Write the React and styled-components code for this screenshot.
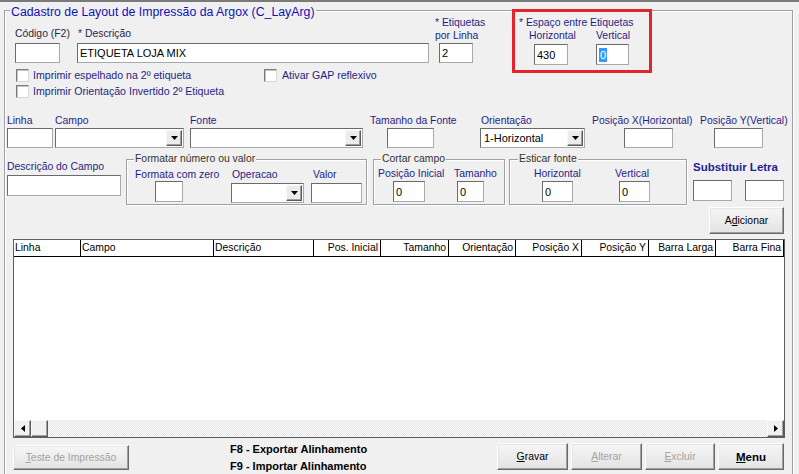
import React from "react";
import styled, { createGlobalStyle } from "styled-components";

const GlobalStyle = createGlobalStyle`
  html, body {
    margin: 0;
    padding: 0;
    background: #f0f0f0;
  }
  body {
    font-family: "Liberation Sans", Arial, sans-serif;
    font-size: 10.4px;
    color: #000;
  }
`;

const Page = styled.div`
  width: 799px;
  height: 474px;
  overflow: hidden;
  box-sizing: border-box;
  border-top: 2px solid #7a7a7a;
  background: #f0f0f0;
`;

const Group = styled.div`
  position: relative;
  box-sizing: border-box;
  flex: none;
  width: ${(p) => p.$w}px;
  height: ${(p) => p.$h}px;
  margin: ${(p) => p.$mt || 0}px 0 0 ${(p) => p.$ml || 0}px;
  border: 1px solid #a0a0a0;
  box-shadow: inset 1px 1px #fff, 1px 1px #fff;
`;

const Legend = styled.span`
  position: absolute;
  left: ${(p) => p.$x}px;
  top: ${(p) => p.$y}px;
  padding: 0 1px;
  background: #f0f0f0;
  white-space: nowrap;
  line-height: ${(p) => (p.$title ? 14 : 13)}px;
  font-size: ${(p) => (p.$title ? 12.3 : 10.4)}px;
  color: ${(p) => (p.$title ? "#1010b8" : "#333")};
`;

const Section = styled.div`
  display: flex;
  align-items: flex-start;
  box-sizing: border-box;
  height: ${(p) => p.$h}px;
  padding: ${(p) => p.$pt || 0}px ${(p) => p.$pr || 0}px 0 ${(p) => p.$pl || 0}px;
  justify-content: ${(p) => (p.$end ? "flex-end" : "flex-start")};
`;

const Column = styled.div`
  display: flex;
  flex-direction: column;
  flex: none;
  width: ${(p) => (p.$w ? `${p.$w}px` : "auto")};
  padding-top: ${(p) => p.$pt || 0}px;
  margin-left: ${(p) => p.$ml || 0}px;
`;

const Row = styled.div`
  display: flex;
  align-items: flex-start;
  gap: ${(p) => p.$gap || 0}px;
  padding: ${(p) => p.$pt || 0}px 0 0 ${(p) => p.$pl || 0}px;
`;

const Field = styled.div`
  display: flex;
  flex-direction: column;
  align-items: flex-start;
  flex: none;
  width: ${(p) => (p.$w ? `${p.$w}px` : "auto")};
  margin-top: ${(p) => p.$mt || 0}px;
  margin-left: ${(p) => p.$ml || 0}px;
`;

const Label = styled.span`
  display: block;
  line-height: 13px;
  white-space: nowrap;
  color: ${(p) => (p.$dark ? "#26264e" : "#1f1f86")};
  padding-left: ${(p) => p.$indent || 0}px;
  margin-bottom: ${(p) => p.$gap ?? 2}px;
`;

const BoldLabel = styled(Label)`
  font-size: 11.5px;
  font-weight: bold;
  color: #1f1f96;
`;

const TextBox = styled.div`
  box-sizing: border-box;
  flex: none;
  width: ${(p) => p.$w}px;
  height: ${(p) => p.$h || 20}px;
  margin-left: ${(p) => p.$ml || 0}px;
  padding: 0 2px;
  display: flex;
  align-items: center;
  background: #fff;
  border: 1px solid;
  border-color: #6b6b6b #a9a9a9 #a9a9a9 #6b6b6b;
  font-family: ${(p) =>
    p.$narrow
      ? `"Liberation Sans Narrow", "Liberation Sans", sans-serif`
      : `"Liberation Sans", Arial, sans-serif`};
  font-size: 11px;
  white-space: nowrap;
  overflow: hidden;
`;

const Selected = styled.span`
  background: #3399ff;
  color: #fff;
  padding: 0 1px;
  line-height: 14px;
`;

const Select = styled(TextBox)`
  padding: 1px;
`;

const SelectText = styled.span`
  flex: 1;
  padding-left: 2px;
`;

const DropButton = styled.span`
  flex: none;
  width: 16px;
  height: 100%;
  box-sizing: border-box;
  background: #ececec;
  border: 1px solid;
  border-color: #f8f8f8 #5a5a5a #5a5a5a #f8f8f8;
  box-shadow: inset -1px -1px #a0a0a0;
  display: flex;
  align-items: center;
  justify-content: center;
`;

const CheckRow = styled.div`
  display: flex;
  align-items: center;
  height: 16px;
  margin-top: ${(p) => p.$mt || 0}px;
`;

const CheckItem = styled.div`
  display: flex;
  align-items: center;
  flex: none;
  width: ${(p) => (p.$w ? `${p.$w}px` : "auto")};
  padding-left: 1px;
`;

const CheckBox = styled.span`
  width: 13px;
  height: 13px;
  box-sizing: border-box;
  flex: none;
  background: #fff;
  border: 1px solid;
  border-color: #7b7b7b #d6d6d6 #d6d6d6 #7b7b7b;
  box-shadow: inset 1px 1px #c4c4c4;
`;

const CheckText = styled.span`
  margin-left: ${(p) => p.$gap || 4}px;
  color: #1f1f86;
  font-size: 10.6px;
  white-space: nowrap;
`;

const SpacingGroup = styled.div`
  position: relative;
  flex: none;
  width: 125px;
  margin-top: 5px;

  &::after {
    content: "";
    position: absolute;
    left: -7px;
    top: -7px;
    width: 140px;
    height: 64px;
    box-sizing: border-box;
    border: 3px solid #e2242d;
    pointer-events: none;
  }
`;

const Button = styled.button`
  box-sizing: border-box;
  flex: none;
  width: ${(p) => p.$w}px;
  height: ${(p) => p.$h || 27}px;
  margin-top: ${(p) => p.$mt || 0}px;
  padding: 0;
  font-family: "Liberation Sans", Arial, sans-serif;
  font-size: ${(p) => (p.$bold ? 11.5 : 10.4)}px;
  font-weight: ${(p) => (p.$bold ? "bold" : "normal")};
  color: ${(p) => (p.disabled ? "#a3a3a3" : "#000")};
  background: linear-gradient(#f6f6f6, #e3e3e3);
  border: 1px solid;
  border-color: #fff #696969 #696969 #fff;
  box-shadow: inset -1px -1px #a0a0a0, inset 1px 1px #e6e6e6;
`;

const Grid = styled.div`
  box-sizing: border-box;
  width: 772px;
  height: 199px;
  margin: 3px 0 0 8px;
  border: 1px solid #5e5e5e;
  background: #fff;
  display: flex;
  flex-direction: column;
`;

const HeaderRow = styled.div`
  display: flex;
  height: 17px;
  box-sizing: border-box;
  border-bottom: 1px solid #000;
`;

const HeaderCell = styled.div`
  box-sizing: border-box;
  flex: none;
  width: ${(p) => p.$w}px;
  padding: 0 2px 0 1px;
  border-right: 1px solid #000;
  line-height: 16px;
  text-align: ${(p) => p.$align};
  white-space: nowrap;
  overflow: hidden;
`;

const GridBody = styled.div`
  flex: 1;
`;

const ScrollBar = styled.div`
  display: flex;
  height: 17px;
  background: repeating-conic-gradient(#e6e6e6 0 25%, #fbfbfb 0 50%) 0 0 / 2px 2px;
`;

const ScrollButton = styled.span`
  box-sizing: border-box;
  width: 17px;
  height: 17px;
  flex: none;
  margin-left: ${(p) => (p.$end ? "auto" : "0")};
  background: #f0f0f0;
  border: 1px solid;
  border-color: #f8f8f8 #5a5a5a #5a5a5a #f8f8f8;
  box-shadow: inset -1px -1px #a0a0a0;
  display: flex;
  align-items: center;
  justify-content: center;
`;

const HotKeys = styled.div`
  margin: 3px 0 0 101px;
  font-size: 11px;
  font-weight: bold;
  line-height: 17px;
  white-space: nowrap;
`;

const ActionBar = styled.div`
  display: flex;
  gap: 3px;
  margin: 5px 0 0 auto;
`;

const columns = [
  ["Linha", 67, "left"],
  ["Campo", 133, "left"],
  ["Descrição", 100, "left"],
  ["Pos. Inicial", 67, "right"],
  ["Tamanho", 68, "right"],
  ["Orientação", 67, "right"],
  ["Posição X", 66, "right"],
  ["Posição Y", 67, "right"],
  ["Barra Larga", 67, "right"],
  ["Barra Fina", 68, "right"],
];

function Arrow({ dir }) {
  const pts = {
    down: "0,0 7,0 3.5,4",
    left: "4,0 4,7 0,3.5",
    right: "0,0 0,7 4,3.5",
  }[dir];
  const w = dir === "down" ? 7 : 4;
  const h = dir === "down" ? 4 : 7;
  return (
    <svg width={w} height={h} viewBox={`0 0 ${w} ${h}`}>
      <polygon points={pts} fill="#000" />
    </svg>
  );
}

function Dropdown({ w, h, value }) {
  return (
    <Select $w={w} $h={h}>
      <SelectText>{value}</SelectText>
      <DropButton>
        <Arrow dir="down" />
      </DropButton>
    </Select>
  );
}

export default function App() {
  return (
    <Page>
      <GlobalStyle />
      <Group $w={789} $h={480} $mt={8} $ml={4}>
        <Legend $title $x={5} $y={-6}>
          Cadastro de Layout de Impressão da Argox (C_LayArg)
        </Legend>

        <Section $h={92} $pl={10}>
          <Column $w={414} $pt={16}>
            <Row>
              <Field $w={62}>
                <Label $dark $gap={3}>Código (F2)</Label>
                <TextBox $w={45} />
              </Field>
              <Field>
                <Label $dark $gap={3} $indent={1}>* Descrição</Label>
                <TextBox $w={352} $narrow>ETIQUETA LOJA MIX</TextBox>
              </Field>
            </Row>
            <CheckRow $mt={4}>
              <CheckItem $w={247}>
                <CheckBox />
                <CheckText>Imprimir espelhado na 2º etiqueta</CheckText>
              </CheckItem>
              <CheckItem>
                <CheckBox />
                <CheckText $gap={5}>Ativar GAP reflexivo</CheckText>
              </CheckItem>
            </CheckRow>
            <CheckRow>
              <CheckItem>
                <CheckBox />
                <CheckText>Imprimir Orientação Invertido 2º Etiqueta</CheckText>
              </CheckItem>
            </CheckRow>
          </Column>

          <Column $w={84} $ml={6} $pt={5}>
            <Label $gap={1}>
              * Etiquetas
              <br />
              por Linha
            </Label>
            <TextBox $w={34} $ml={4}>2</TextBox>
          </Column>

          <SpacingGroup>
            <Label $gap={0}>* Espaço entre Etiquetas</Label>
            <Row $pl={10}>
              <Field $w={67}>
                <Label>Horizontal</Label>
                <TextBox $w={34} $h={21} $ml={5}>430</TextBox>
              </Field>
              <Field>
                <Label>Vertical</Label>
                <TextBox $w={33} $h={21}>
                  <Selected>0</Selected>
                </TextBox>
              </Field>
            </Row>
          </SpacingGroup>
        </Section>

        <Section $h={47} $pt={11} $pl={2}>
          <Field $w={48}>
            <Label $gap={1}>Linha</Label>
            <TextBox $w={46} />
          </Field>
          <Field $w={135}>
            <Label $gap={1}>Campo</Label>
            <Dropdown w={129} />
          </Field>
          <Field $w={180}>
            <Label $gap={1}>Fonte</Label>
            <Dropdown w={173} />
          </Field>
          <Field $w={110}>
            <Label $gap={1}>Tamanho da Fonte</Label>
            <TextBox $w={47} $ml={17} />
          </Field>
          <Field $w={112}>
            <Label $gap={1} $indent={1}>Orientação</Label>
            <Dropdown w={105} value="1-Horizontal" />
          </Field>
          <Field $w={108}>
            <Label $gap={1}>Posição X(Horizontal)</Label>
            <TextBox $w={49} $ml={32} />
          </Field>
          <Field>
            <Label $gap={1}>Posição Y(Vertical)</Label>
            <TextBox $w={49} $ml={14} />
          </Field>
        </Section>

        <Section $h={56} $pl={2}>
          <Field $w={119} $mt={10}>
            <Label>Descrição do Campo</Label>
            <TextBox $w={114} $h={21} />
          </Field>

          <Group $w={241} $h={46} $mt={9}>
            <Legend $x={7} $y={-8}>Formatar número ou valor</Legend>
            <Row $pt={8} $pl={8}>
              <Field $w={96}>
                <Label $gap={0}>Formata com zero</Label>
                <TextBox $w={28} $h={21} $ml={20} />
              </Field>
              <Field $w={80}>
                <Label $indent={1}>Operacao</Label>
                <Dropdown w={73} />
              </Field>
              <Field>
                <Label $indent={2}>Valor</Label>
                <TextBox $w={51} />
              </Field>
            </Row>
          </Group>

          <Group $w={132} $h={46} $mt={9} $ml={6}>
            <Legend $x={7} $y={-8}>Cortar campo</Legend>
            <Row $pt={7} $pl={4}>
              <Field $w={76}>
                <Label $gap={1}>Posição Inicial</Label>
                <TextBox $w={32} $h={21} $ml={15}>0</TextBox>
              </Field>
              <Field>
                <Label $gap={1}>Tamanho</Label>
                <TextBox $w={27} $h={21} $ml={3}>0</TextBox>
              </Field>
            </Row>
          </Group>

          <Group $w={178} $h={46} $mt={9} $ml={4}>
            <Legend $x={8} $y={-8}>Esticar fonte</Legend>
            <Row $pt={7} $pl={24}>
              <Field $w={81}>
                <Label $gap={1}>Horizontal</Label>
                <TextBox $w={31} $h={21} $ml={8}>0</TextBox>
              </Field>
              <Field>
                <Label $gap={1}>Vertical</Label>
                <TextBox $w={31} $h={21} $ml={4}>0</TextBox>
              </Field>
            </Row>
          </Group>

          <Field $mt={11} $ml={6}>
            <BoldLabel $gap={6}>Substituir Letra</BoldLabel>
            <Row $gap={13}>
              <TextBox $w={39} $h={21} />
              <TextBox $w={39} $h={21} />
            </Row>
          </Field>
        </Section>

        <Section $h={30} $end $pr={8}>
          <Button $w={75} $mt={1}>
            A<u>d</u>icionar
          </Button>
        </Section>

        <Grid>
          <HeaderRow>
            {columns.map(([name, w, align]) => (
              <HeaderCell key={name} $w={w} $align={align}>
                {name}
              </HeaderCell>
            ))}
          </HeaderRow>
          <GridBody />
          <ScrollBar>
            <ScrollButton>
              <Arrow dir="left" />
            </ScrollButton>
            <ScrollButton />
            <ScrollButton $end>
              <Arrow dir="right" />
            </ScrollButton>
          </ScrollBar>
        </Grid>

        <Section $h={40} $pl={8} $pr={8}>
          <Button $w={116} $h={25} $mt={7} disabled>
            <u>T</u>este de Impressão
          </Button>
          <HotKeys>
            F8 - Exportar Alinhamento
            <br />
            F9 - Importar Alinhamento
          </HotKeys>
          <ActionBar>
            <Button $w={71}>
              <u>G</u>ravar
            </Button>
            <Button $w={71} disabled>
              <u>A</u>lterar
            </Button>
            <Button $w={70} disabled>
              <u>E</u>xcluir
            </Button>
            <Button $w={66} $bold>
              <u>M</u>enu
            </Button>
          </ActionBar>
        </Section>
      </Group>
    </Page>
  );
}
